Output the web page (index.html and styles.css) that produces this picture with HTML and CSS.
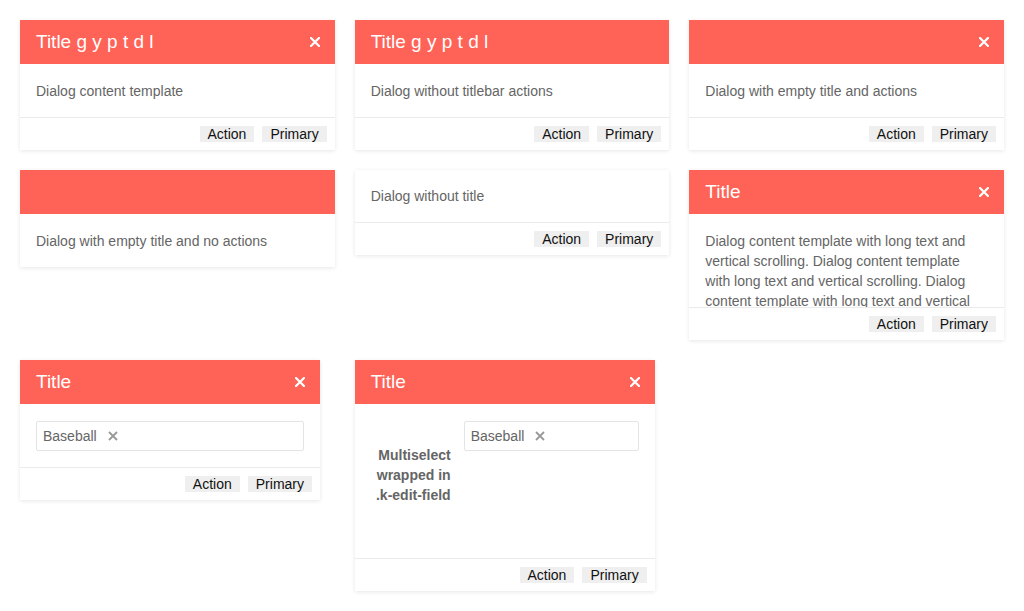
FILE: index.html
```html
<!DOCTYPE html>
<html>
<head>
<meta charset="utf-8">
<link rel="stylesheet" href="styles.css">
</head>
<body>
<div class="grid">
  <div class="dialog">
    <div class="titlebar"><span class="title">Title g y p t d l</span><span class="close"><svg viewBox="0 0 10 10" width="10" height="10"><path d="M1 1L9 9M9 1L1 9" stroke="#fff" stroke-width="2.2" stroke-linecap="square"/></svg></span></div>
    <div class="content">Dialog content template</div>
    <div class="actions"><button class="btn">Action</button><button class="btn">Primary</button></div>
  </div>
  <div class="dialog">
    <div class="titlebar"><span class="title">Title g y p t d l</span></div>
    <div class="content">Dialog without titlebar actions</div>
    <div class="actions"><button class="btn">Action</button><button class="btn">Primary</button></div>
  </div>
  <div class="dialog">
    <div class="titlebar"><span class="title"></span><span class="close"><svg viewBox="0 0 10 10" width="10" height="10"><path d="M1 1L9 9M9 1L1 9" stroke="#fff" stroke-width="2.2" stroke-linecap="square"/></svg></span></div>
    <div class="content">Dialog with empty title and actions</div>
    <div class="actions"><button class="btn">Action</button><button class="btn">Primary</button></div>
  </div>

  <div class="dialog">
    <div class="titlebar"><span class="title"></span></div>
    <div class="content">Dialog with empty title and no actions</div>
  </div>
  <div class="dialog">
    <div class="content">Dialog without title</div>
    <div class="actions"><button class="btn">Action</button><button class="btn">Primary</button></div>
  </div>
  <div class="dialog">
    <div class="titlebar"><span class="title">Title</span><span class="close"><svg viewBox="0 0 10 10" width="10" height="10"><path d="M1 1L9 9M9 1L1 9" stroke="#fff" stroke-width="2.2" stroke-linecap="square"/></svg></span></div>
    <div class="content scroll">Dialog content template with long text and vertical scrolling. Dialog content template with long text and vertical scrolling. Dialog content template with long text and vertical scrolling. Dialog content template with long text and vertical scrolling.</div>
    <div class="actions"><button class="btn">Action</button><button class="btn">Primary</button></div>
  </div>

  <div class="dialog narrow">
    <div class="titlebar"><span class="title">Title</span><span class="close"><svg viewBox="0 0 10 10" width="10" height="10"><path d="M1 1L9 9M9 1L1 9" stroke="#fff" stroke-width="2.2" stroke-linecap="square"/></svg></span></div>
    <div class="content">
      <div class="multiselect"><span class="tag">Baseball</span><span class="tag-x"><svg viewBox="0 0 10 10" width="10" height="10"><path d="M1 1L9 9M9 1L1 9" stroke="#999" stroke-width="1.8"/></svg></span></div>
    </div>
    <div class="actions"><button class="btn">Action</button><button class="btn">Primary</button></div>
  </div>
  <div class="dialog narrow">
    <div class="titlebar"><span class="title">Title</span><span class="close"><svg viewBox="0 0 10 10" width="10" height="10"><path d="M1 1L9 9M9 1L1 9" stroke="#fff" stroke-width="2.2" stroke-linecap="square"/></svg></span></div>
    <div class="content form">
      <div class="label">Multiselect wrapped in .k-edit-field</div>
      <div class="field">
        <div class="multiselect"><span class="tag">Baseball</span><span class="tag-x"><svg viewBox="0 0 10 10" width="10" height="10"><path d="M1 1L9 9M9 1L1 9" stroke="#999" stroke-width="1.8"/></svg></span></div>
      </div>
    </div>
    <div class="actions"><button class="btn">Action</button><button class="btn">Primary</button></div>
  </div>
</div>
</body>
</html>
```

FILE: styles.css
```css
html, body {
  margin: 0;
  padding: 0;
  background: #fff;
}
body {
  padding: 20px;
  font-family: "Liberation Sans", Arial, sans-serif;
  font-size: 14px;
  line-height: 20px;
  color: #656565;
}
.grid {
  display: grid;
  grid-template-columns: repeat(3, 1fr);
  column-gap: 20px;
  row-gap: 20px;
  align-items: start;
}
.dialog {
  background: #fff;
  box-shadow: 0 1px 4px rgba(0, 0, 0, 0.1);
  display: flex;
  flex-direction: column;
}
.dialog.narrow {
  width: 300px;
}
.titlebar {
  background: #ff6358;
  background-clip: padding-box;
  border-bottom: 1px solid transparent;
  color: #fff;
  height: 45px;
  box-sizing: border-box;
  padding: 12px 14px 12px 16px;
  display: flex;
  align-items: center;
}
.title {
  flex: 1;
  font-size: 19px;
  line-height: 20px;
  white-space: nowrap;
}
.close {
  width: 12px;
  height: 12px;
  display: flex;
  align-items: center;
  justify-content: center;
}
.close svg {
  display: block;
}
.content {
  padding: 16px;
}
.content.scroll {
  height: 92px;
  box-sizing: border-box;
  padding-bottom: 0;
  overflow: hidden;
}
.content.form {
  display: flex;
  min-height: 153px;
  box-sizing: border-box;
  gap: 13px;
}
.label {
  width: 80px;
  flex: none;
  text-align: right;
  font-weight: bold;
  padding-top: 24px;
}
.field {
  flex: 1;
}
.actions {
  border-top: 1px solid #ebebeb;
  padding: 8px;
  display: flex;
  justify-content: flex-end;
  gap: 8px;
}
.btn {
  font-family: "Liberation Sans", Arial, sans-serif;
  font-size: 14px;
  line-height: 16px;
  height: 16px;
  padding: 0 8px;
  border: none;
  border-radius: 0;
  background: #efefef;
  color: #111;
  margin: 0;
}
.multiselect {
  border: 1px solid #e4e4e4;
  border-radius: 2px;
  height: 30px;
  box-sizing: border-box;
  display: flex;
  align-items: center;
  padding-left: 6px;
  gap: 11px;
}
.tag {
  color: #656565;
}
.tag-x {
  display: flex;
  align-items: center;
}
.tag-x svg {
  display: block;
}
```
